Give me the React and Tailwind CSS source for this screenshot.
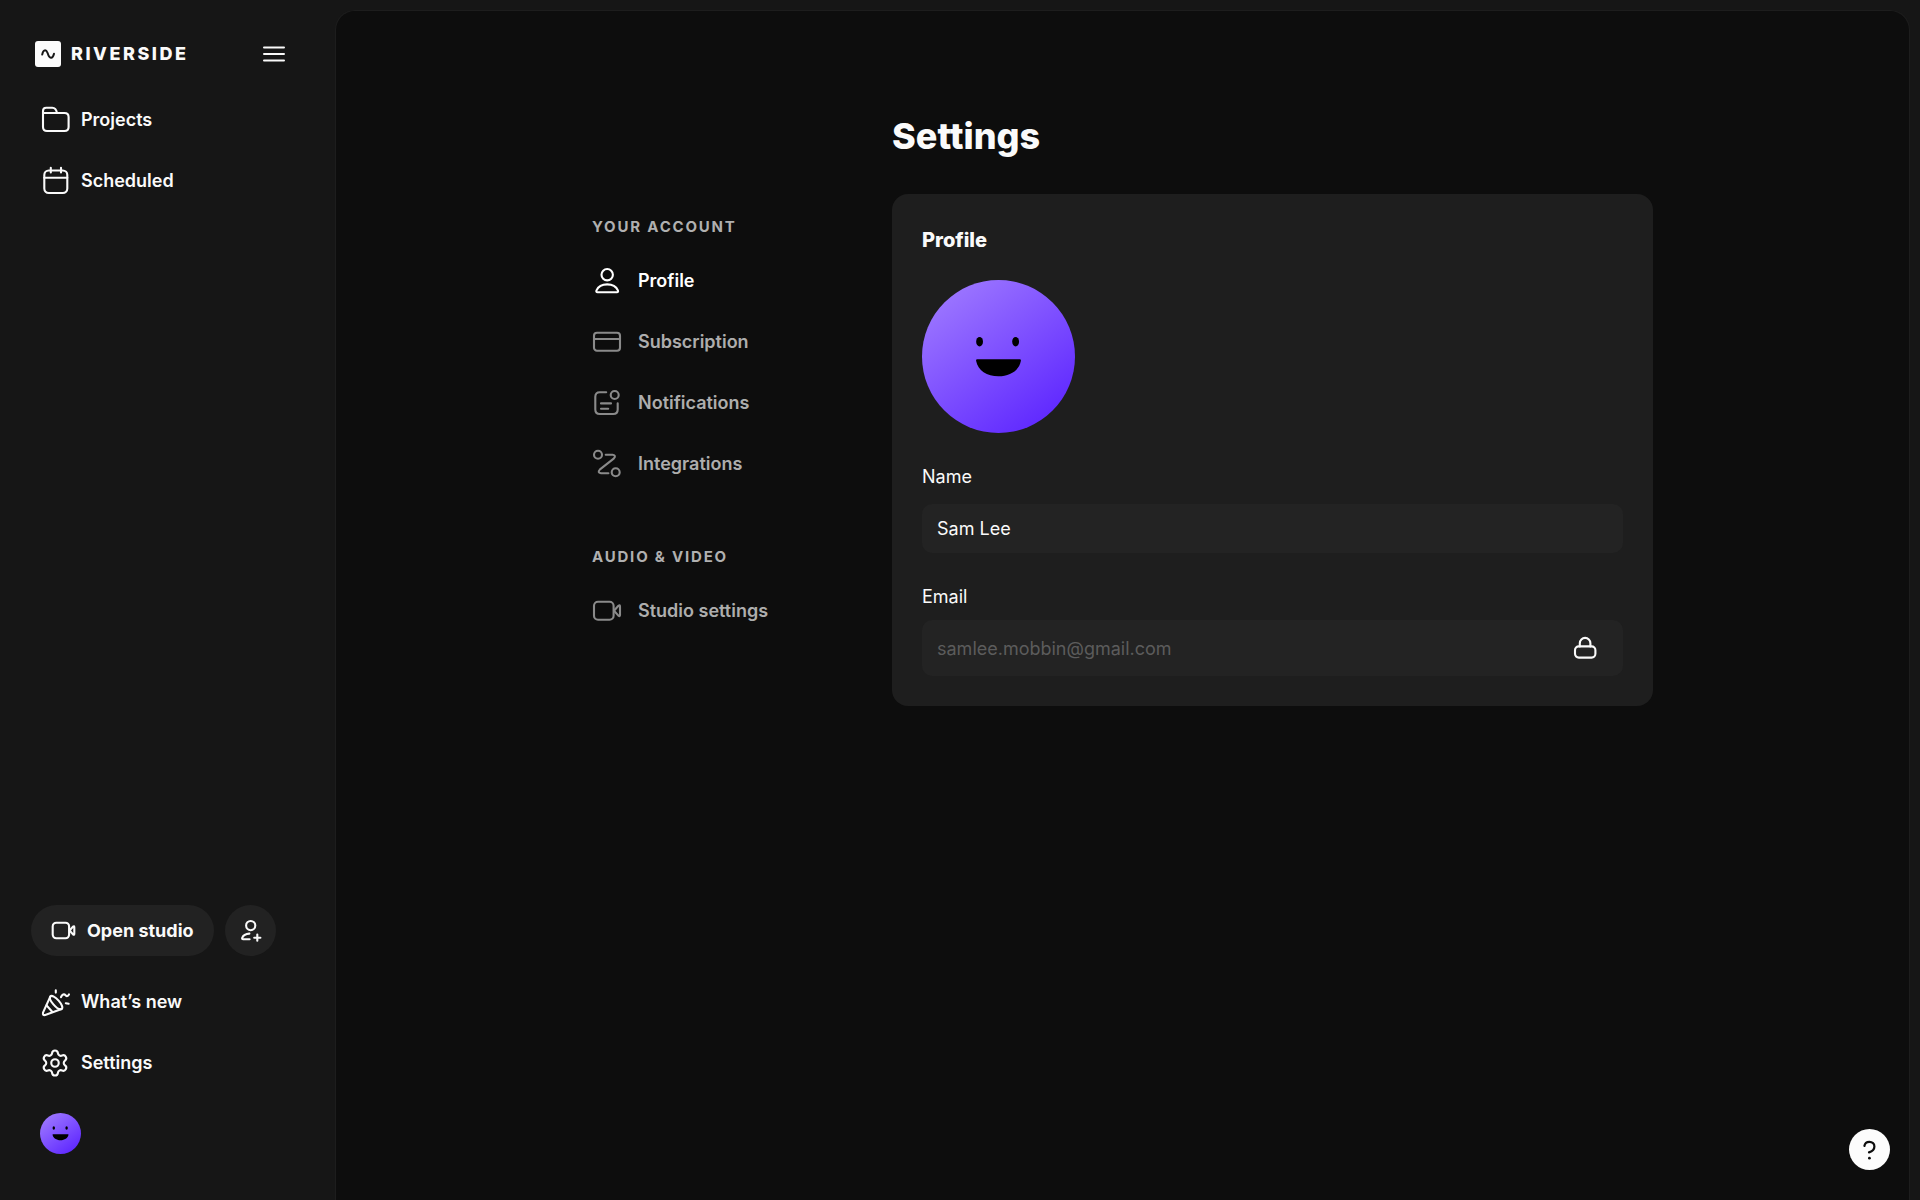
import React, { useState } from 'react';
import { Settings as SettingsIcon } from 'lucide-react';

// Shared wrapper for the line icons
const Icon = ({ size = 30, children }) => (
  <svg
    width={size}
    height={size}
    viewBox={`0 0 ${size} ${size}`}
    fill="none"
    stroke="currentColor"
    strokeWidth="2.1"
    strokeLinecap="round"
    strokeLinejoin="round"
    className="shrink-0"
    aria-hidden="true"
  >
    {children}
  </svg>
);

const FolderIcon = () => (
  <Icon>
    <path d="M3 8H24.5Q28.6 8 28.6 12V22Q28.6 26 24.5 26H7Q3 26 3 22V6Q3 2.8 6.2 2.8H12.3Q16 2.8 17 8" />
  </Icon>
);

const CalendarIcon = () => (
  <Icon>
    <rect x="4.3" y="4.5" width="23" height="22.5" rx="4.5" />
    <path d="M4.3 11.8H27.3M10.8 1.8V6.4M21 1.8V6.4" />
  </Icon>
);

const UserIcon = () => (
  <Icon>
    <circle cx="15.2" cy="8.7" r="5.7" />
    <path d="M5.6 26.3H24.8Q26.6 26.2 25.9 24.4C24.2 20.6 20 18.4 15.2 18.4S6.2 20.6 4.5 24.4Q3.8 26.2 5.6 26.3Z" />
  </Icon>
);

const CardIcon = () => (
  <Icon>
    <rect x="2" y="5.7" width="26" height="18" rx="3" />
    <path d="M2 12H28" />
  </Icon>
);

const NotificationsIcon = () => (
  <Icon>
    <path d="M14.2 4.3H7.8Q3.3 4.3 3.3 8.8V21.5Q3.3 26 7.8 26H21.2Q25.7 26 25.7 21.5V15.2" />
    <circle cx="22.7" cy="7" r="4" />
    <path d="M9 15.4H19M9 20.8H16.2" />
  </Icon>
);

const IntegrationsIcon = () => (
  <Icon>
    <circle cx="6" cy="5.7" r="4" />
    <circle cx="23.7" cy="23.3" r="4" />
    <path d="M13.7 5.7H20.6Q24.6 6.3 21.7 9.6L8 20.4Q5 23.6 9 24.2H16.4" />
  </Icon>
);

const CameraIcon = () => (
  <Icon>
    <rect x="2" y="5.7" width="19.6" height="18" rx="4" />
    <path d="M22 14.7L26.4 9.8Q28 8.6 28 10.4V19Q28 20.8 26.4 19.6Z" />
  </Icon>
);

const SmallCameraIcon = () => (
  <Icon size={25}>
    <rect x="1.7" y="4.8" width="16.4" height="15.4" rx="3.6" />
    <path d="M18.6 12.5L22 8.6Q23.3 7.6 23.3 9.2V15.8Q23.3 17.4 22 16.4Z" />
  </Icon>
);

const UserPlusIcon = () => (
  <Icon size={25}>
    <circle cx="12.7" cy="7.6" r="4.6" />
    <path d="M11.4 15.6C8 15.8 5.2 17.4 4.2 19.8Q3.8 21.2 5.2 21.3H11.6" />
    <path d="M19.3 16.6V22.8M16.2 19.7H22.4" />
  </Icon>
);

const PartyIcon = () => (
  <Icon>
    <path d="M10.3 9.6L3 25.6Q2.4 28.6 5.2 28L21.6 22" />
    <path d="M10.3 9.6C11.5 7.6 15.6 10.2 18.6 13.6S23.4 20.8 21.6 22C19.8 23 16 20.4 13.4 17.4S9.2 11.2 10.3 9.6Z" />
    <path d="M6.6 18.4L12.4 25" />
    <path d="M15.8 3.4V5.6M21 10.2C22 7.2 24.2 6.6 25.4 8.2S28.2 9 29 7.4M25.8 16.2L28.6 16.8" />
  </Icon>
);

const LockIcon = () => (
  <Icon size={24}>
    <rect x="2" y="10.4" width="20.4" height="11.2" rx="3.8" />
    <path d="M6.8 10.4V7.2A5.3 5.3 0 0 1 17.4 7.2V10.4" />
  </Icon>
);

const HelpIcon = () => (
  <svg width="20" height="20" viewBox="0 0 20 20" fill="none" aria-hidden="true">
    <path
      d="M4.4 6C4.8 3.4 6.8 1.8 9.4 1.8C12.3 1.8 14.4 3.6 14.4 6.4C14.4 9.4 12 11.4 9 12.4"
      stroke="#0d0d0d"
      strokeWidth="2.2"
      strokeLinecap="round"
    />
    <circle cx="9.4" cy="18.2" r="1.4" fill="#0d0d0d" />
  </svg>
);

const Avatar = ({ id, className, faceTransform }) => (
  <svg viewBox="0 0 152 152" className={className} role="img" aria-label="Avatar">
    <defs>
      <linearGradient id={id} x1="0.15" y1="0.1" x2="0.8" y2="0.95">
        <stop offset="0" stopColor="#9b75ff" />
        <stop offset="1" stopColor="#5f28ff" />
      </linearGradient>
    </defs>
    <circle cx="76" cy="76" r="76" fill={`url(#${id})`} />
    <g transform={faceTransform}>
      <ellipse cx="57.2" cy="61.3" rx="3.4" ry="4.7" />
      <ellipse cx="93" cy="61.3" rx="3.4" ry="4.7" />
      <path d="M54.8 78.7H97.2Q98.6 78.7 98.2 80.4C96.6 89.6 87.4 95.7 76 95.7S55.4 89.6 53.8 80.4Q53.4 78.7 54.8 78.7Z" />
    </g>
  </svg>
);

const accountItems = [
  { label: 'Profile', icon: UserIcon, active: true },
  { label: 'Subscription', icon: CardIcon },
  { label: 'Notifications', icon: NotificationsIcon },
  { label: 'Integrations', icon: IntegrationsIcon },
];

const videoItems = [{ label: 'Studio settings', icon: CameraIcon }];

const SidebarLink = ({ icon, children }) => (
  <a href="#" className="flex h-15 items-center gap-[11px] text-lg font-semibold">
    {icon}
    {children}
  </a>
);

const SettingsGroup = ({ title, items }) => (
  <section>
    <h2 className="text-[15px] leading-6 font-bold tracking-[0.12em] text-[#b0b0b0] uppercase">{title}</h2>
    <ul className="mt-3 flex flex-col gap-px">
      {items.map(({ label, icon: ItemIcon, active }) => (
        <li key={label}>
          <a
            href="#"
            aria-current={active ? 'page' : undefined}
            className="group flex h-15 items-center gap-4 text-lg font-semibold text-[#adadad] aria-[current=page]:text-white"
          >
            <span className="text-[#8a8a8a] group-aria-[current=page]:text-white">
              <ItemIcon />
            </span>
            {label}
          </a>
        </li>
      ))}
    </ul>
  </section>
);

const Sidebar = () => (
  <aside className="flex w-[335px] shrink-0 flex-col pt-9 pb-[46px]">
    <div className="flex h-9 items-center justify-between pr-[50px] pl-[35px]">
      <a href="#" className="flex items-center gap-2.5">
        <svg width="26" height="26" viewBox="0 0 26 26" fill="none" aria-hidden="true">
          <rect width="26" height="26" rx="3" fill="#fcfcfc" />
          <path
            d="M7.2 13.6C8.2 8.4 11 8 12.6 12C14.4 18 17.6 18.4 19 12.8"
            stroke="#161616"
            strokeWidth="2"
            strokeLinecap="round"
          />
        </svg>
        <span className="text-lg font-extrabold tracking-[0.14em]">RIVERSIDE</span>
      </a>
      <button type="button" aria-label="Toggle menu">
        <svg width="22" height="18" viewBox="0 0 22 18" stroke="currentColor" strokeWidth="2" strokeLinecap="round">
          <path d="M1 2.4H21M1 9H21M1 15.6H21" />
        </svg>
      </button>
    </div>

    <nav className="mt-[18px] flex flex-col gap-px px-10">
      <SidebarLink icon={<FolderIcon />}>Projects</SidebarLink>
      <SidebarLink icon={<CalendarIcon />}>Scheduled</SidebarLink>
    </nav>

    <div className="mt-auto flex gap-[11px] px-[31px]">
      <button
        type="button"
        className="flex h-[51px] items-center gap-[11px] rounded-full bg-[#222222] px-5 text-lg font-bold"
      >
        <SmallCameraIcon />
        Open studio
      </button>
      <button
        type="button"
        aria-label="Invite"
        className="flex size-[51px] items-center justify-center rounded-full bg-[#222222]"
      >
        <UserPlusIcon />
      </button>
    </div>

    <nav className="mt-4 flex flex-col gap-px px-10">
      <SidebarLink icon={<PartyIcon />}>What’s new</SidebarLink>
      <SidebarLink icon={<SettingsIcon size={30} strokeWidth={1.7} />}>Settings</SidebarLink>
    </nav>

    <button type="button" aria-label="Account" className="mt-5 ml-10 size-[41px]">
      <Avatar id="avatarSmall" className="size-full" faceTransform="translate(-25 -26) scale(1.33)" />
    </button>
  </aside>
);

const App = () => {
  const [name, setName] = useState('Sam Lee');

  return (
    <div className="flex min-h-screen bg-[#161616] font-['Inter',sans-serif] text-[#fafafa]">
      <Sidebar />

      <main className="mt-2.5 mr-2.5 flex-1 rounded-t-[20px] border border-b-0 border-[#1d1d1d] bg-[#0d0d0d] px-8 pt-[101px]">
        <div className="mx-auto grid max-w-[1061px] grid-cols-[300px_1fr]">
          <h1 className="col-start-2 text-4xl leading-12 font-extrabold">Settings</h1>

          <nav className="mt-[55px] flex flex-col gap-[51px]">
            <SettingsGroup title="Your account" items={accountItems} />
            <SettingsGroup title="Audio & video" items={videoItems} />
          </nav>

          <section className="mt-[34px] rounded-2xl bg-[#1e1e1e] p-[30px]">
            <h2 className="text-xl leading-8 font-extrabold">Profile</h2>
            <Avatar id="avatarLarge" className="mt-6 size-[153px]" />

            <label htmlFor="name" className="mt-[30px] block text-lg">
              Name
            </label>
            <input
              id="name"
              type="text"
              value={name}
              onChange={(e) => setName(e.target.value)}
              className="mt-[13px] block h-[49px] w-full rounded-[10px] bg-[#232323] px-[15px] text-lg outline-none"
            />

            <label htmlFor="email" className="mt-[30px] block text-lg">
              Email
            </label>
            <div className="mt-[9px] flex h-14 items-center rounded-[10px] bg-[#232323] pr-[26px]">
              <input
                id="email"
                type="email"
                value="samlee.mobbin@gmail.com"
                disabled
                readOnly
                className="h-full min-w-0 flex-1 px-[15px] text-lg text-[#5c5c5c] outline-none"
              />
              <LockIcon />
            </div>
          </section>
        </div>
      </main>

      <button
        type="button"
        aria-label="Help"
        className="fixed right-[30px] bottom-[30px] flex size-[41px] items-center justify-center rounded-full bg-[#fcfcfc]"
      >
        <HelpIcon />
      </button>
    </div>
  );
};

export default App;
